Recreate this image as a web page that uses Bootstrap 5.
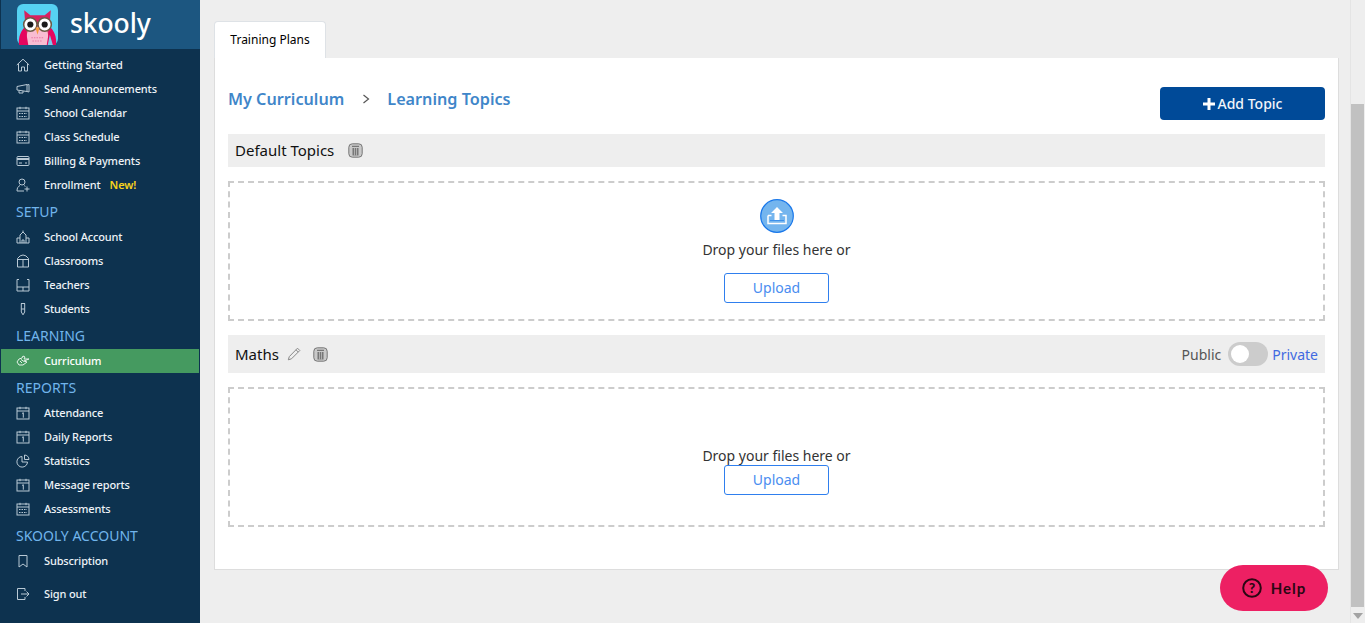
<!DOCTYPE html>
<html lang="en"><head><meta charset="utf-8"><title>Skooly</title>
<link rel="stylesheet" href="https://cdn.jsdelivr.net/npm/bootstrap@5.3.0/dist/css/bootstrap.min.css">
<style>
html,body{height:100%;overflow:hidden}
body{font-family:"Noto Sans","Open Sans",sans-serif;background:#eee;color:#212529}
.shell{height:623px}
.side{width:200px;flex:none;background:#0d324f;padding:0 1px 0 1px;overflow:hidden}
.brand{height:49px;margin:0 -1px 4px 0;background:#1c5680;gap:12px;padding-left:16px}
.brand-name{font-size:26.5px;font-weight:500;line-height:1;color:#fff;margin-top:-2px;letter-spacing:-.1px}
.side .nav-link{height:24px;padding:0 0 0 15px;color:#eef3f7;font-size:11px;font-weight:500;gap:14px;letter-spacing:-.14px}
.side .nav-link svg{width:14px;height:14px;flex:none;fill:none;stroke:#b9c9d5;stroke-width:1}
.side .nav-link.on{background:#459a60;color:#fff}
.side .nav-link.on svg{stroke:#e4f1e8}
.side .nav-link.out{margin-top:9px}
.new-tag{color:#f6d21c;margin-left:-5px;font-weight:600}
.sec{height:28px;line-height:30px;padding-left:15px;color:#71b5ec;font-size:14px}
.mainarea{min-width:0;padding:21px 11px 0 14px}
.tabstrip{border:0;margin:0}
.tabstrip .nav-link{height:37px;width:112px;margin:0;padding:0;font-size:12px;color:#444;background:#fff;border:1px solid #e2e2e2;border-bottom:0;border-radius:4px 4px 0 0}
.panel{height:512px;border:1px solid #ddd;border-top:0;border-radius:0;background:#fff;padding:0 13px}
.crumbs{height:76px;padding-top:28px}
.crumb-link{font-size:16.2px;font-weight:600;color:#3f86c9;line-height:26px;text-decoration:none}
.crumb-sep{width:43px;text-align:center;color:#555;font-size:0}
.crumb-sep svg{width:8px;height:10px;fill:none;stroke:#555;stroke-width:1.2}
.add-btn{width:165px;height:33px;margin-top:1px;background:#004a98;border:0;border-radius:4px;font-size:14px;font-weight:500;color:#f2f5fa;padding:0;gap:3px}
.add-btn:hover{background:#004a98}
.add-btn svg{width:12px;height:12px;fill:#fff}
.topic-bar{background:#eee;padding:0 7px;font-size:15px;color:#111}
.topic-a{height:33px}.topic-b{height:38px}
.ico-trash{width:15px;height:15px;fill:#c9c9c9;stroke:#777;margin-left:14px}
.ico-pen{width:14px;height:14px;fill:none;stroke:#888;margin-right:-2px}
.drop{height:140px;margin:14px 0;border:2px dashed #ccc;font-size:14px;color:#333}
.up-ico{width:34px;height:34px;margin-bottom:7px}
.up-text{line-height:20px;margin-bottom:13px}
.up-tight{margin-bottom:-1px;margin-top:26px}
.up-btn{width:105px;height:30px;padding:0;font-size:14px;line-height:28px;color:#4a8df0;border:1px solid #2f7fee;border-radius:3px;background:#fff}
.vis{font-size:14px;color:#555;gap:7px}
.vis-on{color:#4169e1;margin-left:-3px}
.swt{width:40px;height:24px;background:#ccc;border-radius:12px;padding:3px}
.knob{display:block;width:18px;height:18px;border-radius:50%;background:#fff}
.sbar{width:15px;flex:none;background:#eee;border-left:1px solid #e4e4e4;padding:104px 1px 0 0}
.sthumb{height:503px;background:#c1c1c1}
.sarrow{width:0;height:0;margin:6px auto 0;border:5px solid transparent;border-top:6px solid #a3a3a3;border-bottom:0}
.help{position:absolute;left:1220px;top:565px;width:108px;height:46px;border:0;border-radius:23px;background:#ed2063;color:#2b0713;font-family:"Lato",sans-serif;font-weight:700;font-size:15px;letter-spacing:1px;gap:9px;padding:0}
.help svg{width:20px;height:20px}
.help svg text{font-family:"Lato",sans-serif;font-size:14px;font-weight:900;fill:#2b0713;letter-spacing:0}
</style></head>
<body>
<svg width="0" height="0" class="d-none"><defs>
<symbol id="cal" viewBox="0 0 14 14"><rect x="1" y="2" width="12" height="11"/><path d="M1 5h12M4 .8v2.400M10 .8v2.400"/><path stroke-width="1.200" stroke-dasharray="1.500 1" d="M3 7.500h8M3 10.500h8"/></symbol>
<symbol id="day" viewBox="0 0 14 14"><rect x="1" y="2" width="12" height="11"/><path d="M1 5h12M4 .8v2.400M10 .8v2.400M6 7.500l1.300-.8v5"/></symbol>
</defs></svg>
<div class="shell d-flex">
<aside class="side">
 <div class="brand d-flex align-items-center">
  <svg width="41" height="41" viewBox="0 0 40 40">
   <rect width="40" height="40" rx="6" fill="#56d2f2"/>
   <path d="M7 6l6 5h14l6-5-1 12 3 22H5l3-22z" fill="#d8215f"/>
   <path d="M11 22h18l3 18H8z" fill="#f8bcd2"/>
   <path d="M2 40c-1-8 2-14 6-18l3 18z" fill="#e5065f"/>
   <path d="M38 40c1-8-2-14-6-18l-3 18z" fill="#e5065f"/>
   <path d="M32 30l3 10h-5z" fill="#7cc7e8"/>
   <circle cx="13" cy="20" r="6.500" fill="#fff" stroke="#6b5a45" stroke-width="1.500"/>
   <circle cx="27" cy="20" r="6.500" fill="#fff" stroke="#6b5a45" stroke-width="1.500"/>
   <circle cx="13" cy="20" r="3" fill="#1a1a1a"/><circle cx="27" cy="20" r="3" fill="#1a1a1a"/>
   <path d="M18 23h4l-2 7z" fill="#f59a3b"/>
   <path d="M14 33h12M15 36h10" stroke="#e97aa6" stroke-dasharray="1.500 1"/>
  </svg>
  <span class="brand-name">skooly</span>
 </div>
 <nav class="nav flex-column flex-nowrap">
  <a class="nav-link d-flex align-items-center" href="#"><svg viewBox="0 0 14 14"><path d="M.8 7L7 1.200 13.200 7M2.500 6v7h3V9h3v4h3V6"/></svg>Getting Started</a>
  <a class="nav-link d-flex align-items-center" href="#"><svg viewBox="0 0 14 14"><path d="M1 4.500L11 2.500v7L1 8zM11 3l2-.5v7.500l-2-.5M3 8.500v2.500h4V9"/></svg>Send Announcements</a>
  <a class="nav-link d-flex align-items-center" href="#"><svg><use href="#cal"/></svg>School Calendar</a>
  <a class="nav-link d-flex align-items-center" href="#"><svg><use href="#cal"/></svg>Class Schedule</a>
  <a class="nav-link d-flex align-items-center" href="#"><svg viewBox="0 0 14 14"><rect x="1" y="2.500" width="12" height="9" rx="1"/><path stroke-width="2" d="M1 5h12"/><path d="M3 9h3M9 9h2"/></svg>Billing &amp; Payments</a>
  <a class="nav-link d-flex align-items-center" href="#"><svg viewBox="0 0 14 14"><circle cx="6" cy="4" r="3"/><path d="M1 13c0-3 1-4.500 3-5.500M8 7.500c.7.300 1 .6 1.300 1M1 13h7M11 8.500v5M8.500 11h5"/></svg>Enrollment <span class="new-tag">New!</span></a>
  <div class="sec">SETUP</div>
  <a class="nav-link d-flex align-items-center" href="#"><svg viewBox="0 0 14 14"><path d="M1 13V8h3V5l3-3 3 3v3h3v5zM4 8v5M10 8v5M6 13v-3h2v3M7 2V.5"/></svg>School Account</a>
  <a class="nav-link d-flex align-items-center" href="#"><svg viewBox="0 0 14 14"><path d="M1.500 4.500Q4 1 7 1t5.500 3.500V13h-11zM1.500 5.500h11M7 5.500V13"/></svg>Classrooms</a>
  <a class="nav-link d-flex align-items-center" href="#"><svg viewBox="0 0 14 14"><path d="M1 1.500v11.500h12V1.500M1 1.500h2M13 1.500h-2M1 9h12M7 9v4"/></svg>Teachers</a>
  <a class="nav-link d-flex align-items-center" href="#"><svg viewBox="0 0 14 14"><path d="M5 1.500h4M5.300 1.500V10L7 12.800 8.700 10V1.500M5.300 7h3.400"/></svg>Students</a>
  <div class="sec">LEARNING</div>
  <a class="nav-link on d-flex align-items-center" href="#"><svg viewBox="0 0 14 14"><path d="M1 8l2-3 3-1 1-2 2 1-1 2h5l-5 2 3 1-4 3H3zM4 7l2 2M5 5.500l3 2"/></svg>Curriculum</a>
  <div class="sec">REPORTS</div>
  <a class="nav-link d-flex align-items-center" href="#"><svg><use href="#day"/></svg>Attendance</a>
  <a class="nav-link d-flex align-items-center" href="#"><svg><use href="#day"/></svg>Daily Reports</a>
  <a class="nav-link d-flex align-items-center" href="#"><svg viewBox="0 0 14 14"><path d="M6 2.500a5.300 5.300 0 1 0 5.500 5.500H6zM8.500 1a4.500 4.500 0 0 1 4.500 4.500H8.500z"/></svg>Statistics</a>
  <a class="nav-link d-flex align-items-center" href="#"><svg><use href="#day"/></svg>Message reports</a>
  <a class="nav-link d-flex align-items-center" href="#"><svg><use href="#cal"/></svg>Assessments</a>
  <div class="sec">SKOOLY ACCOUNT</div>
  <a class="nav-link d-flex align-items-center" href="#"><svg viewBox="0 0 14 14"><path d="M3 1.500h8V13l-4-3-4 3z"/></svg>Subscription</a>
  <a class="nav-link out d-flex align-items-center" href="#"><svg viewBox="0 0 14 14"><path d="M9 4V1.500H1.500v11H9V10M5 7h8M10.500 4.500L13 7l-2.500 2.500"/></svg>Sign out</a>
 </nav>
</aside>
<main class="mainarea flex-grow-1">
 <ul class="nav nav-tabs tabstrip"><li class="nav-item"><a class="nav-link active d-flex align-items-center justify-content-center" href="#">Training Plans</a></li></ul>
 <section class="card panel">
  <div class="crumbs d-flex justify-content-between align-items-start">
   <div class="d-flex align-items-center"><a class="crumb-link" href="#">My Curriculum</a><span class="crumb-sep"><svg viewBox="0 0 8 10"><path d="M1.500 1l5 4-5 4"/></svg></span><a class="crumb-link" href="#">Learning Topics</a></div>
   <button class="btn btn-primary add-btn d-flex align-items-center justify-content-center" type="button"><svg viewBox="0 0 12 12"><path d="M4.500 0h3v4.500H12v3H7.500V12h-3V7.500H0v-3h4.500z"/></svg>Add Topic</button>
  </div>
  <div class="topic-bar topic-a d-flex align-items-center"><span>Default Topics</span>
   <svg class="ico-trash" viewBox="0 0 15 15"><rect x=".8" y=".8" width="13.400" height="13.400" rx="3.500"/><path fill="#777" stroke="none" d="M4 2.800h7v1.200H4zM4.500 5h6v7.500h-6z"/><path stroke="#c9c9c9" stroke-width=".7" d="M6.500 5v7.500M8.500 5v7.500"/></svg>
  </div>
  <div class="drop d-flex flex-column align-items-center justify-content-center">
   <svg class="up-ico" viewBox="0 0 34 34"><circle cx="17" cy="17" r="16.300" fill="#74b5ee" stroke="#1a78ea" stroke-width="1.200"/><path d="M8 16.500v8h18v-8h-3.500M11.500 16.500H8" fill="none" stroke="#fff" stroke-width="1.500"/><path d="M17 8l-6 6h3.500v7h5v-7H23z" fill="#fff"/><path d="M10 21.500h14" stroke="#1a78ea" stroke-width=".6"/></svg>
   <div class="up-text">Drop your files here or</div>
   <button class="btn up-btn" type="button">Upload</button>
  </div>
  <div class="topic-bar topic-b d-flex align-items-center justify-content-between">
   <div class="d-flex align-items-center"><span>Maths</span>
    <svg class="ico-pen ms-2" viewBox="0 0 14 14"><path d="M10.500 1.200l2.300 2.300-8.300 8.300-3.200 1 1-3.200zM9 2.800l2.300 2.300"/></svg>
    <svg class="ico-trash" viewBox="0 0 15 15"><rect x=".8" y=".8" width="13.400" height="13.400" rx="3.500"/><path fill="#777" stroke="none" d="M4 2.800h7v1.200H4zM4.500 5h6v7.500h-6z"/><path stroke="#c9c9c9" stroke-width=".7" d="M6.500 5v7.500M8.500 5v7.500"/></svg>
   </div>
   <div class="vis d-flex align-items-center"><span>Public</span><span class="swt"><span class="knob"></span></span><span class="vis-on">Private</span></div>
  </div>
  <div class="drop d-flex flex-column align-items-center justify-content-center">
   <div class="up-text up-tight">Drop your files here or</div>
   <button class="btn up-btn" type="button">Upload</button>
  </div>
 </section>
</main>
<div class="sbar"><div class="sthumb"></div><div class="sarrow"></div></div>
</div>
<button class="help btn d-flex align-items-center justify-content-center" type="button"><svg viewBox="0 0 20 20"><circle cx="10" cy="10" r="8.800" fill="none" stroke="#2b0713" stroke-width="2"/><text x="10" y="15" text-anchor="middle">?</text></svg>Help</button>
</body></html>
